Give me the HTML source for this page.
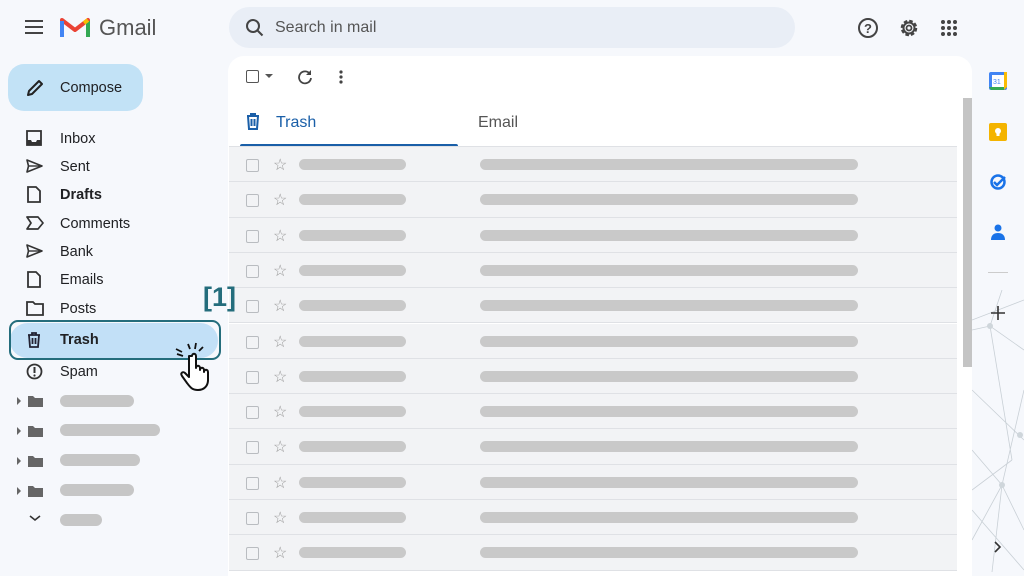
<!DOCTYPE html>
<html><head><meta charset="utf-8"><style>
*{margin:0;padding:0;box-sizing:border-box}
body{width:1024px;height:572px;overflow:hidden;background:#f6f8fc;font-family:"Liberation Sans",sans-serif;position:relative;color:#202124}
.abs{position:absolute}
.nav{position:absolute;left:60px;font-size:14.5px;color:#202124}
.ic{position:absolute;left:26px}
.row{position:absolute;left:229px;width:728px;height:35.3px;background:#f2f3f5;border-bottom:1px solid #dfe1e5}
.cb{position:absolute;left:17px;top:12px;width:13px;height:13px;border:1.5px solid #b9bcc0;border-radius:2px}
.st{position:absolute;left:44px;top:8px;color:#999;font-size:16px}
.b1{position:absolute;left:70px;top:12px;width:107px;height:11px;border-radius:6px;background:#c9c9c9}
.b2{position:absolute;left:251px;top:12px;width:378px;height:11px;border-radius:6px;background:#c9c9c9}
.fb{position:absolute;left:60px;height:12px;border-radius:6px;background:#c6c6c6}
</style></head><body>
<!-- header -->
<svg class="abs" style="left:24px;top:19px" width="20" height="16"><path d="M1 2h18M1 8h18M1 14h18" stroke="#444" stroke-width="2"/></svg>
<svg class="abs" style="left:60px;top:16px" width="30" height="22" viewBox="0 0 30 22"><path d="M2 21V4l13 10L28 4v17" fill="none" stroke="#ea4335" stroke-width="4" stroke-linejoin="round"/><path d="M2 21V5" stroke="#4285f4" stroke-width="4"/><path d="M28 21V5" stroke="#34a853" stroke-width="4"/><path d="M24 7l4-3" stroke="#fbbc04" stroke-width="4"/></svg>
<div class="abs" style="left:99px;top:15px;font-size:22px;color:#555">Gmail</div>
<div class="abs" style="left:229px;top:7px;width:566px;height:41px;border-radius:22px;background:#e9eef6"></div>
<svg class="abs" style="left:245px;top:18px" width="20" height="20"><circle cx="8" cy="8" r="6" fill="none" stroke="#444" stroke-width="2"/><path d="M12.5 12.5l5 5" stroke="#444" stroke-width="2"/></svg>
<div class="abs" style="left:275px;top:19px;font-size:16px;color:#555">Search in mail</div>
<svg class="abs" style="left:857px;top:17px" width="22" height="22"><circle cx="11" cy="11" r="9" fill="none" stroke="#444" stroke-width="2"/><text x="7" y="16" font-size="13" font-weight="bold" fill="#444" font-family="Liberation Sans">?</text></svg>
<svg class="abs" style="left:898px;top:17px" width="22" height="22" viewBox="0 0 22 22"><circle cx="11" cy="11" r="7" fill="none" stroke="#444" stroke-width="2.5" stroke-dasharray="3.5 2"/><circle cx="11" cy="11" r="5.5" fill="none" stroke="#444" stroke-width="2"/><circle cx="11" cy="11" r="2.5" fill="none" stroke="#444" stroke-width="1.8"/></svg>
<svg class="abs" style="left:940px;top:19px" width="18" height="18"><g fill="#444"><circle cx="3" cy="3" r="2"/><circle cx="9" cy="3" r="2"/><circle cx="15" cy="3" r="2"/><circle cx="3" cy="9" r="2"/><circle cx="9" cy="9" r="2"/><circle cx="15" cy="9" r="2"/><circle cx="3" cy="15" r="2"/><circle cx="9" cy="15" r="2"/><circle cx="15" cy="15" r="2"/></g></svg>
<!-- compose -->
<div class="abs" style="left:8px;top:64px;width:135px;height:47px;border-radius:16px;background:#c2e2f6"></div>
<svg class="abs" style="left:25px;top:78px" width="20" height="20"><path d="M3 17l1-4L14 3l3 3L7 16z" fill="none" stroke="#222" stroke-width="2" stroke-linejoin="round"/></svg>
<div class="abs" style="left:60px;top:80px;font-size:14.5px">Compose</div>
<!-- nav -->
<div class="abs" style="left:10px;top:323px;width:208px;height:35px;border-radius:18px;background:#c2e0f7"></div>
<div class="abs" style="left:9px;top:320px;width:212px;height:40px;border-radius:9px;border:2.5px solid #246d7c"></div>
<svg class="ic" style="top:130px" width="16" height="16"><rect x="1" y="1" width="14" height="14" fill="none" stroke="#333" stroke-width="1.8"/><path d="M1 10h4l1 2h4l1-2h4v5H1z" fill="#333"/></svg>
<svg class="ic" style="top:158px" width="17" height="16"><path d="M1 2l15 6-15 6 1.5-6z" fill="none" stroke="#333" stroke-width="1.6" stroke-linejoin="round"/><path d="M2.5 8H16" stroke="#333" stroke-width="1.4"/></svg>
<svg class="ic" style="top:186px" width="16" height="17"><path d="M2 1h8l4 4v11H2z" fill="none" stroke="#333" stroke-width="1.8"/></svg>
<svg class="ic" style="top:216px" width="18" height="14"><path d="M1 1h11l5 6-5 6H1l4-6z" fill="none" stroke="#333" stroke-width="1.7" stroke-linejoin="round"/></svg>
<svg class="ic" style="top:243px" width="17" height="16"><path d="M1 2l15 6-15 6 1.5-6z" fill="none" stroke="#333" stroke-width="1.6" stroke-linejoin="round"/><path d="M2.5 8H16" stroke="#333" stroke-width="1.4"/></svg>
<svg class="ic" style="top:271px" width="16" height="17"><path d="M2 1h8l4 4v11H2z" fill="none" stroke="#333" stroke-width="1.8"/></svg>
<svg class="ic" style="top:301px" width="18" height="15"><path d="M1 1h6l2 2h8v11H1z" fill="none" stroke="#333" stroke-width="1.8"/></svg>
<svg class="ic" style="top:332px" width="16" height="16"><path d="M2 3h12M6 3V1h4v2M3 3l1 12h8l1-12M6.5 6v6M9.5 6v6" fill="none" stroke="#223" stroke-width="1.8"/></svg>
<svg class="ic" style="top:363px" width="17" height="17"><circle cx="8.5" cy="8.5" r="7" fill="none" stroke="#333" stroke-width="1.8"/><path d="M8.5 4v6" stroke="#333" stroke-width="2"/><circle cx="8.5" cy="12.5" r="1.1" fill="#333"/></svg>
<div class="nav" style="top:131px">Inbox</div>
<div class="nav" style="top:159px">Sent</div>
<div class="nav" style="top:187px;font-weight:bold">Drafts</div>
<div class="nav" style="top:216px">Comments</div>
<div class="nav" style="top:244px">Bank</div>
<div class="nav" style="top:272px">Emails</div>
<div class="nav" style="top:301px">Posts</div>
<div class="nav" style="top:332px;font-weight:bold">Trash</div>
<div class="nav" style="top:364px">Spam</div>
<!-- folders -->
<svg class="abs" style="left:16px;top:395px" width="30" height="130"><g fill="#666"><path d="M1 2l4 4-4 4z"/><path d="M1 32l4 4-4 4z"/><path d="M1 62l4 4-4 4z"/><path d="M1 92l4 4-4 4z"/><path d="M12 1h5l2 2h8v9H12z"/><path d="M12 31h5l2 2h8v9H12z"/><path d="M12 61h5l2 2h8v9H12z"/><path d="M12 91h5l2 2h8v9H12z"/></g><path d="M14 121l5 4 5-4" fill="none" stroke="#333" stroke-width="1.6"/></svg>
<div class="fb" style="top:395px;width:74px"></div>
<div class="fb" style="top:424px;width:100px"></div>
<div class="fb" style="top:454px;width:80px"></div>
<div class="fb" style="top:484px;width:74px"></div>
<div class="fb" style="top:514px;width:42px"></div>
<!-- main panel -->
<div class="abs" style="left:228px;top:56px;width:744px;height:520px;background:#fff;border-radius:16px 16px 0 0"></div>
<div class="abs" style="left:963px;top:98px;width:9px;height:269px;background:#c4c4c4"></div>
<div class="abs" style="left:246px;top:70px;width:13px;height:13px;border:1.6px solid #555;border-radius:2px"></div>
<div class="abs" style="left:265px;top:74px;border:4px solid transparent;border-top:4px solid #555"></div>
<svg class="abs" style="left:297px;top:69px" width="16" height="16"><path d="M13 5A6 6 0 1 0 14 9" fill="none" stroke="#444" stroke-width="1.8"/><path d="M14 1v5h-5" fill="#444"/></svg>
<svg class="abs" style="left:338px;top:69px" width="6" height="16"><g fill="#444"><circle cx="3" cy="3" r="1.6"/><circle cx="3" cy="8" r="1.6"/><circle cx="3" cy="13" r="1.6"/></g></svg>
<svg class="abs" style="left:245px;top:113px" width="16" height="17"><path d="M2 3h12M6 3V1h4v2M3 3l1 13h8l1-13M6.5 6v7M9.5 6v7" fill="none" stroke="#1a5fa8" stroke-width="2"/></svg>
<div class="abs" style="left:276px;top:114px;font-size:16px;color:#1a5fa8">Trash</div>
<div class="abs" style="left:478px;top:114px;font-size:16px;color:#555">Email</div>
<div class="abs" style="left:240px;top:144px;width:218px;height:3px;background:#1a5fa8;border-radius:2px 2px 0 0"></div>
<div class="abs" style="left:229px;top:146px;width:728px;height:1px;background:#dfe1e5"></div>
<div class="row" style="top:147px"><div class="cb"></div><div class="st">☆</div><div class="b1"></div><div class="b2"></div></div>
<div class="row" style="top:182.3px"><div class="cb"></div><div class="st">☆</div><div class="b1"></div><div class="b2"></div></div>
<div class="row" style="top:217.6px"><div class="cb"></div><div class="st">☆</div><div class="b1"></div><div class="b2"></div></div>
<div class="row" style="top:252.9px"><div class="cb"></div><div class="st">☆</div><div class="b1"></div><div class="b2"></div></div>
<div class="row" style="top:288.2px"><div class="cb"></div><div class="st">☆</div><div class="b1"></div><div class="b2"></div></div>
<div class="row" style="top:323.5px"><div class="cb"></div><div class="st">☆</div><div class="b1"></div><div class="b2"></div></div>
<div class="row" style="top:358.8px"><div class="cb"></div><div class="st">☆</div><div class="b1"></div><div class="b2"></div></div>
<div class="row" style="top:394.1px"><div class="cb"></div><div class="st">☆</div><div class="b1"></div><div class="b2"></div></div>
<div class="row" style="top:429.4px"><div class="cb"></div><div class="st">☆</div><div class="b1"></div><div class="b2"></div></div>
<div class="row" style="top:464.7px"><div class="cb"></div><div class="st">☆</div><div class="b1"></div><div class="b2"></div></div>
<div class="row" style="top:500px"><div class="cb"></div><div class="st">☆</div><div class="b1"></div><div class="b2"></div></div>
<div class="row" style="top:535.3px"><div class="cb"></div><div class="st">☆</div><div class="b1"></div><div class="b2"></div></div>
<!-- overlays -->
<div class="abs" style="left:203px;top:282px;font-size:27px;font-weight:bold;color:#246d7c">[1]</div>
<svg class="abs" style="left:174px;top:342px" width="50" height="50" viewBox="0 0 50 50"><path d="M14 2l2 5M22 1l-1 6M29 5l-4 4M3 12l6 2M2 7l6 3" stroke="#111" stroke-width="1.8"/><path d="M18 14c0-3 4-3 4 0v12c0-3 4-3 4 0v2c0-3 4-3 4 0v2c0-3 4-3 4 0v8c0 6-4 10-10 10s-8-3-11-7l-5-7c-2-3 1-5 3-3l4 4V14z" fill="#fff" stroke="#111" stroke-width="2" stroke-linejoin="round"/></svg>
<!-- right side -->
<svg class="abs" style="left:972px;top:290px" width="52" height="282"><g stroke="#c9d0d6" stroke-width="0.8" fill="none"><path d="M0 30L52 10M0 40L18 36L52 60M18 36L30 0M18 36L40 170M0 100L52 150M0 250L30 195L52 240M30 195L0 160M30 195L52 100M20 282L30 195M0 220L52 280M40 170L0 200"/></g><g fill="#cfd6db"><circle cx="18" cy="36" r="3"/><circle cx="30" cy="195" r="3"/><circle cx="48" cy="145" r="3"/></g></svg>
<svg class="abs" style="left:989px;top:72px" width="18" height="18"><rect x="0" y="0" width="18" height="18" rx="2" fill="#4285f4"/><rect x="3" y="3" width="12" height="12" fill="#fff"/><path d="M15 0h3v15l-3 3z" fill="#fbbc04"/><path d="M0 15h15v3H2z" fill="#34a853"/><text x="4" y="12" font-size="7" fill="#4285f4" font-family="Liberation Sans">31</text></svg>
<svg class="abs" style="left:989px;top:123px" width="18" height="18"><rect width="18" height="18" rx="2" fill="#f4b400"/><circle cx="9" cy="8" r="3" fill="#fff"/><rect x="7.5" y="10" width="3" height="3" fill="#fff"/></svg>
<svg class="abs" style="left:989px;top:173px" width="18" height="18"><circle cx="9" cy="9" r="6.5" fill="none" stroke="#1a73e8" stroke-width="2.5"/><path d="M5 9l3 3 8-8" fill="none" stroke="#1a73e8" stroke-width="2.5"/></svg>
<svg class="abs" style="left:990px;top:223px" width="16" height="18"><circle cx="8" cy="5" r="3.5" fill="#1a73e8"/><path d="M1 17c0-5 3-7 7-7s7 2 7 7z" fill="#1a73e8"/></svg>
<div class="abs" style="left:988px;top:272px;width:20px;height:1px;background:#ccc"></div>
<svg class="abs" style="left:990px;top:305px" width="16" height="16"><path d="M8 1v14M1 8h14" stroke="#333" stroke-width="1.6"/></svg>
<svg class="abs" style="left:994px;top:541px" width="8" height="12"><path d="M1 1l5 5-5 5" fill="none" stroke="#333" stroke-width="1.6"/></svg>
</body></html>
